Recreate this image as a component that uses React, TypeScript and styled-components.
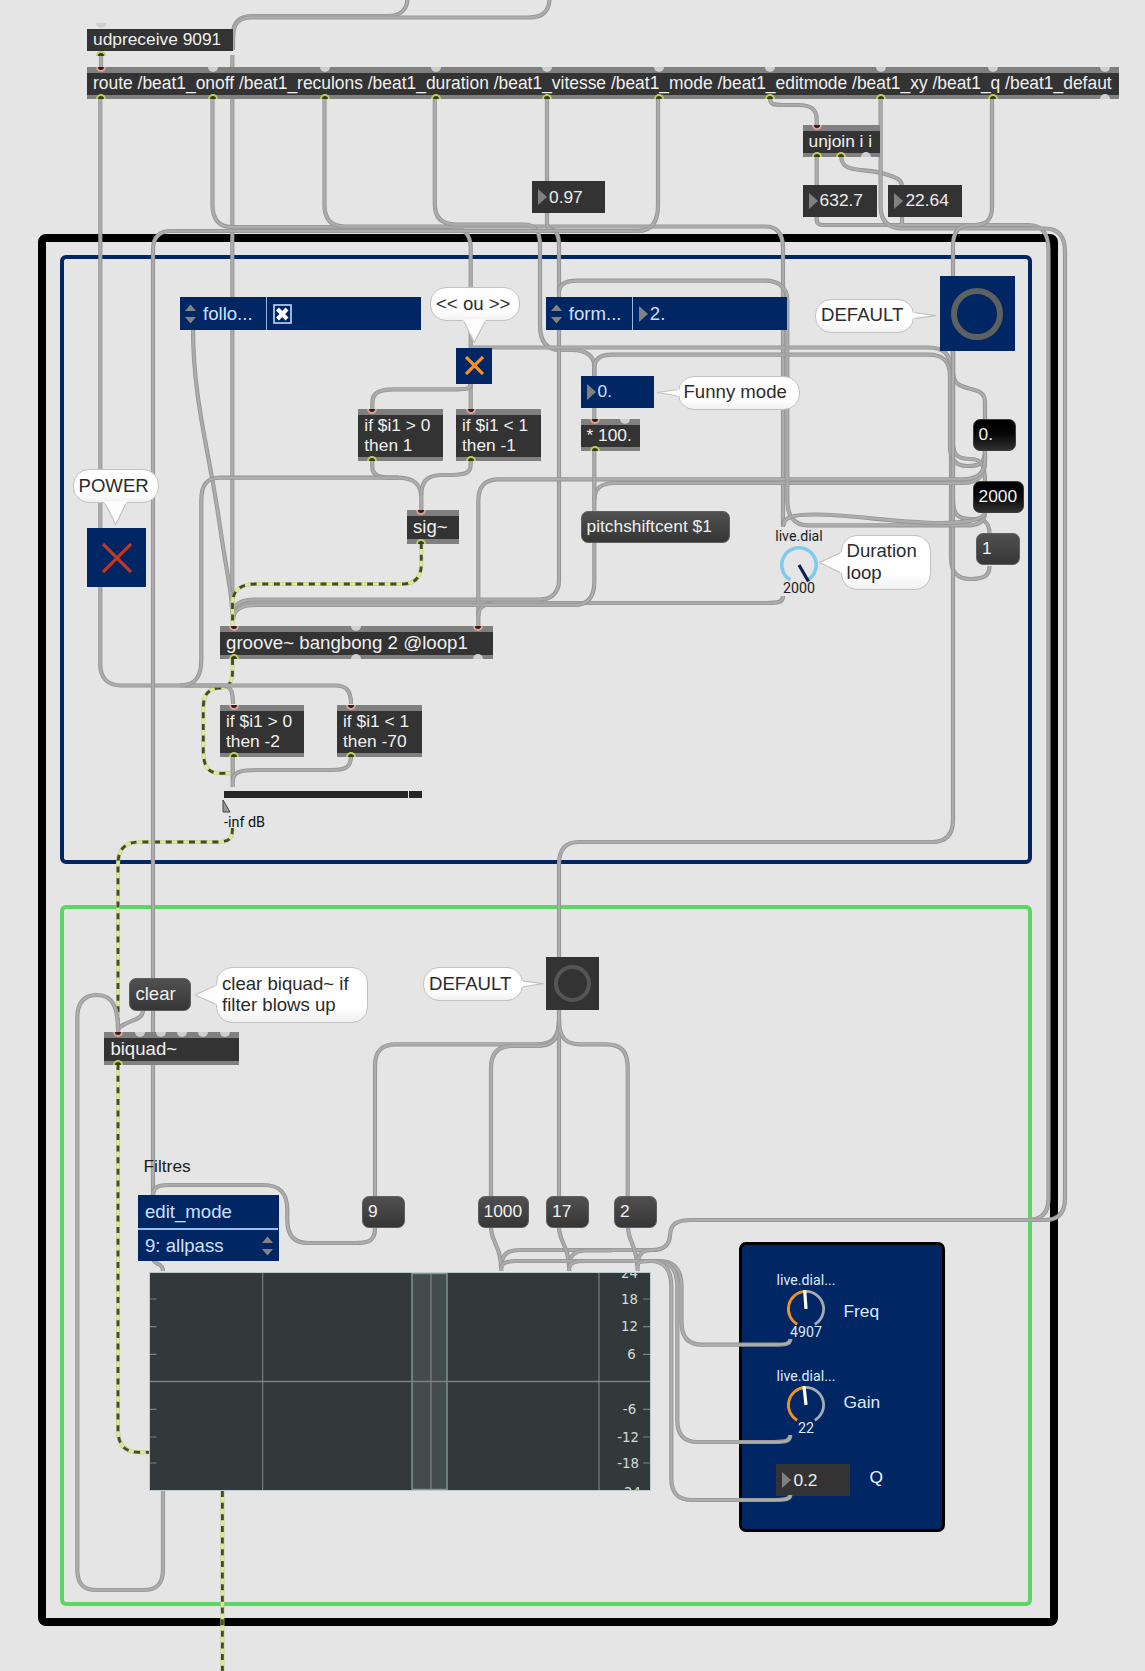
import React from "react";
import styled, { createGlobalStyle, css } from "styled-components";

const sans = `"Liberation Sans", Arial, sans-serif`;
const navy = "#002664";

const Global = createGlobalStyle`
  html, body { margin: 0; padding: 0; background: #e5e5e5; }
  * { box-sizing: border-box; }
`;

const Patcher = styled.main`
  position: relative;
  width: 1145px;
  height: 1671px;
  overflow: hidden;
  background: #e5e5e5;
  font-family: ${sans};
`;

type Place = { $x: number; $y: number; $w?: number; $h?: number };
const place = css<Place>`
  position: absolute;
  left: ${(p) => p.$x}px;
  top: ${(p) => p.$y}px;
  ${(p) => p.$w !== undefined && `width: ${p.$w}px;`}
  ${(p) => p.$h !== undefined && `height: ${p.$h}px;`}
`;

const Panel = styled.section<Place & { $line: string; $border: number; $radius: number; $fill?: string }>`
  ${place}
  border: ${(p) => p.$border}px solid ${(p) => p.$line};
  border-radius: ${(p) => p.$radius}px;
  background: ${(p) => p.$fill ?? "transparent"};
`;

const Cables = styled.svg`
  position: absolute;
  left: 0;
  top: 0;
  pointer-events: none;
`;

/* ---------- object boxes ---------- */

const ObjectFrame = styled.div<Place & { $bare?: boolean }>`
  ${place}
  display: flex;
  flex-direction: column;
  background: ${(p) => (p.$bare ? "transparent" : "#808080")};
  padding: 6px 0;
`;

const ObjectBody = styled.div<{ $size: number }>`
  flex: 1;
  display: flex;
  align-items: center;
  padding: 0 0 2px 6px;
  background: #333;
  color: #f0f0f0;
  font-size: ${(p) => p.$size}px;
  line-height: ${(p) => (p.$size > 18 ? 21 : 20)}px;
  white-space: pre;
`;

const Port = styled.i<{ $x: number; $side: "in" | "out"; $live?: boolean }>`
  position: absolute;
  left: ${(p) => p.$x - 5}px;
  ${(p) => (p.$side === "in" ? "top: 0; border-radius: 0 0 5px 5px;" : "bottom: 0; border-radius: 5px 5px 0 0;")}
  width: 10px;
  height: 5px;
  ${(p) =>
    p.$live
      ? p.$side === "in"
        ? "background: #3a1a18; border: 2px solid #dca096; border-top: 0;"
        : "background: #373d16; border: 2px solid #bccb66; border-bottom: 0;"
      : "background: #cfcfcf;"}
`;

type ObjProps = {
  x: number; y: number; w: number; h: number; text: string; size?: number; bare?: boolean;
  ins?: number[]; outs?: number[]; idleIns?: number[]; idleOuts?: number[];
};
const Obj = ({ x, y, w, h, text, size = 17.35, bare, ins = [], outs = [], idleIns = [], idleOuts = [] }: ObjProps) => (
  <ObjectFrame $x={x} $y={y} $w={w} $h={h} $bare={bare}>
    <ObjectBody $size={size}>{text}</ObjectBody>
    {idleIns.map((p) => <Port key={"a" + p} $x={p - x} $side="in" />)}
    {idleOuts.map((p) => <Port key={"b" + p} $x={p - x} $side="out" />)}
    {ins.map((p) => <Port key={"c" + p} $x={p - x} $side="in" $live />)}
    {outs.map((p) => <Port key={"d" + p} $x={p - x} $side="out" $live />)}
  </ObjectFrame>
);

/* ---------- message and number boxes ---------- */

const Message = styled.button<Place & { $hot?: boolean; $size?: number }>`
  ${place}
  display: flex;
  align-items: center;
  padding: 0 0 1px 5px;
  border: 1px solid ${(p) => (p.$hot ? "#3c3c3c" : "#5e5e5e")};
  border-radius: 7px;
  background: ${(p) => (p.$hot ? "linear-gradient(#000, #050505 45%, #303030)" : "linear-gradient(#505050, #363636)")};
  color: #f0f0f0;
  font: ${(p) => p.$size ?? 17.35}px ${sans};
  white-space: pre;
`;

const NumberFrame = styled.div<Place & { $blue?: boolean }>`
  ${place}
  display: flex;
  align-items: center;
  gap: 2px;
  padding-left: 6px;
  background: ${(p) => (p.$blue ? navy : "#333")};
  color: ${(p) => (p.$blue ? "#cfe0ff" : "#ececec")};
  font-size: 17.35px;
  white-space: pre;
`;

const Flag = styled.i`
  width: 0;
  height: 0;
  border-left: 9px solid #808080;
  border-top: 8px solid transparent;
  border-bottom: 8px solid transparent;
`;

const NumberBox = ({ x, y, w = 74, h = 32, value, blue }: { x: number; y: number; w?: number; h?: number; value: string; blue?: boolean }) => (
  <NumberFrame $x={x} $y={y} $w={w} $h={h} $blue={blue}>
    <Flag />
    <span>{value}</span>
  </NumberFrame>
);

/* ---------- attribute controls ---------- */

const AttrFrame = styled.div<Place>`
  ${place}
  display: flex;
  background: ${navy};
  color: #cfe0ff;
  font-size: 18.6px;
`;
const AttrName = styled.div`
  width: 87px;
  display: flex;
  align-items: center;
  gap: 7px;
  padding-left: 5px;
  border-right: 1px solid #9db6e6;
`;
const AttrValue = styled.div`
  flex: 1;
  display: flex;
  align-items: center;
  gap: 2px;
  padding-left: 6px;
`;
const Arrows = () => (
  <svg width="11" height="20" viewBox="0 0 11 20">
    <path d="M0 7 5.5 .5 11 7ZM0 13 5.5 19.5 11 13Z" fill="#838383" />
  </svg>
);
const CheckBox = () => (
  <svg width="19" height="20" viewBox="0 0 19 20">
    <rect x="1" y="1" width="17" height="18" fill="none" stroke="#b9cdf4" strokeWidth="1.7" />
    <path d="M4.5 5 14 15M14 5 4.5 15" stroke="#fff" strokeWidth="4" />
  </svg>
);

const MenuFrame = styled.div<Place>`
  ${place}
  display: grid;
  grid-template-rows: 35px 1fr;
  background: ${navy};
  color: #cfe0ff;
  font-size: 18.6px;
`;
const MenuRow = styled.div<{ $ruled?: boolean }>`
  display: flex;
  align-items: center;
  justify-content: space-between;
  padding: 1px 6px 0 7px;
  ${(p) => p.$ruled && "border-bottom: 2px solid #a3bbea; margin-right: 1px;"}
`;

/* ---------- toggles, bangs, dials ---------- */

const Square = styled.button<Place & { $fill: string }>`
  ${place}
  display: grid;
  place-items: center;
  padding: 0;
  border: 0;
  background: ${(p) => p.$fill};
`;
const Cross = ({ size, color }: { size: number; color: string }) => (
  <svg width={size} height={size} viewBox={`0 0 ${size} ${size}`}>
    <path d={`M1 1 ${size - 1} ${size - 1}M${size - 1} 1 1 ${size - 1}`} stroke={color} strokeWidth="3.2" />
  </svg>
);
const Ring = styled.i<{ $d: number; $t: number; $c: string }>`
  width: ${(p) => p.$d}px;
  height: ${(p) => p.$d}px;
  border: ${(p) => p.$t}px solid ${(p) => p.$c};
  border-radius: 50%;
`;

const DialFrame = styled.div<Place & { $ink: string }>`
  ${place}
  display: flex;
  flex-direction: column;
  align-items: center;
  color: ${(p) => p.$ink};
  font: 14.2px/15px Roboto, sans-serif;
  white-space: nowrap;
`;
const DialFace = styled.svg`
  display: block;
  margin: 1px 0 -4px;
`;

const polar = (r: number, deg: number) => {
  const a = (deg * Math.PI) / 180;
  return `${(20 + r * Math.cos(a)).toFixed(2)} ${(20 + r * Math.sin(a)).toFixed(2)}`;
};
type DialProps = { x: number; y: number; w: number; label: string; value: string; angle: number; ink: string; on: string; off: string; needle: string; t: number };
const Dial = ({ x, y, w, label, value, angle, ink, on, off, needle, t }: DialProps) => {
  const r = 19 - t / 2;
  const large = angle - 120 > 180 ? 1 : 0;
  return (
    <DialFrame $x={x} $y={y} $w={w} $ink={ink}>
      <span>{label}</span>
      <DialFace width="40" height="40" viewBox="0 0 40 40">
        {angle < 415 && <path d={`M${polar(r, angle + 4)} A${r} ${r} 0 0 1 ${polar(r, 420)}`} fill="none" stroke={off} strokeWidth={t} />}
        <path d={`M${polar(r, 120)} A${r} ${r} 0 ${large} 1 ${polar(r, angle)}`} fill="none" stroke={on} strokeWidth={t} />
        <path d={`M${polar(0, 0)} L${polar(19, angle)}`} stroke={needle} strokeWidth="3.2" />
      </DialFace>
      <span>{value}</span>
    </DialFrame>
  );
};

/* ---------- comments ---------- */

const BubbleFrame = styled.div<Place & { $radius: number }>`
  ${place}
  display: flex;
  align-items: center;
  padding: 0 0 1px 5px;
  border: 1.5px solid #c2c2c2;
  border-radius: ${(p) => p.$radius}px;
  background: linear-gradient(#fff 72%, #f1f1f1);
  color: #2b2b2b;
  font-size: 18.6px;
  line-height: 21.5px;
  white-space: pre;
`;
type BubbleProps = { x: number; y: number; w: number; h: number; text: string; tip: [number, number]; a: [number, number]; b: [number, number]; radius?: number };
const Bubble = ({ x, y, w, h, text, tip, a, b, radius = 16 }: BubbleProps) => (
  <>
    <BubbleFrame $x={x} $y={y} $w={w} $h={h} $radius={radius}>{text}</BubbleFrame>
    <Cables width="1145" height="1671">
      <path d={`M${a} L${tip} L${b}`} fill="#fdfdfd" stroke="#c2c2c2" strokeWidth="1.2" />
      <path d={`M${a} L${b}`} stroke="#fdfdfd" strokeWidth="2.2" />
    </Cables>
  </>
);

const Note = styled.span<Place & { $color: string; $font?: string }>`
  ${place}
  color: ${(p) => p.$color};
  font: ${(p) => p.$font ?? `17.35px/20px ${sans}`};
  white-space: pre;
`;

/* ---------- gain slider ---------- */

const GainTrack = styled.div<Place>`
  ${place}
  display: grid;
  grid-template-columns: 1fr 13px;
  gap: 1px;
  & > i { background: #262626; }
`;

/* ---------- patch cords ---------- */

const cords = [
  "M407.5 -2C407.5 10 400 16 388 16H252C240 16 233 22 233 34V50",
  "M549.5 -2C549.5 11 543 17.5 529 17.5H252C240 17.5 233 22 233 38",
  "M101 54V70",
  "M232.3 55V612",
  "M100.3 98V665C100.3 678 108 685.5 121 685.5H222C230 685.5 233 690 233 704",
  "M185 685.5H335C346 685.5 351 690 351 704",
  "M212.5 98V205C212.5 219 219 227 232 227H448C463 227 470.7 233 470.7 248V409",
  "M324.5 98V205C324.5 219 331 226.5 345 226.5H765C777 226.5 783 234 783 248V526",
  "M434.8 98V204C434.8 217 441 224.5 456 224.5H524C535 224.5 540 231 540 245V325C540 341 546 350 560 350H572C586 350 594.3 356 594.3 366V376",
  "M547 98V181",
  "M547 212V224C547 228 550 229 553 230C557 231 559 238 559 246V580C559 592 552 599.5 540 599.5H256C242 599.5 233 604 233 614",
  "M658 98V205C658 221 652 231 638 231H171C158 231 153 238 153 250V1195",
  "M770 98C770 104 773 105 783 105H798C811 105 816.7 109 816.7 120V126",
  "M816.7 156V185",
  "M841.2 156C841.2 175 865 167 885 174C898 178 902 180 902 186",
  "M816.7 215V220C816.7 224 819 225 824 225H1028C1042 225 1048.5 233 1048.5 250V1198C1048.5 1212 1042 1220 1028 1220",
  "M902 215V224",
  "M880.6 98V206C880.6 221 888 228.5 903 228.5H1045C1059 228.5 1065 237 1065 252V1198C1065 1212 1059 1220 1045 1220H691C677 1220 670 1224 670 1236C669 1246 663 1250 652 1250H521C508 1250 501.5 1254 501.5 1266",
  "M992 98V207C992 219 987 225 975 225H968C958 226 953 233 953 246V276",
  "M193 328C193 400 209 450 219 520S232 590 232.3 614",
  "M470.7 347.5H928C944 347.5 951 354 951 372V557C951 572 957 579 970 579C984 579 989.5 576 989.5 566",
  "M594.3 376V368C594.3 359 600 354.7 612 354.7H928C943 354.7 950 361 950 376V446C950 458 955 466 967 466C979 466 985 464 985 450",
  "M594.3 406V420",
  "M953 350V372C953 396 985 382 985 402V420",
  "M953 350V444C953 456 960 459 970 459C980 459 985 463 985 481",
  "M953 350V500C953 514 958 519 970 519C984 519 989.5 521 989.5 534",
  "M953 350V820C953 835 946 842 932 842H579C566 842 559 849 559 864V957",
  "M985 450V462C985 476 977 483 963 483H615C601 483 594.3 488 594.3 500",
  "M985 450V460C985 473 977 479.3 963 479.3H499C485 479.3 478.3 486 478.3 501V628",
  "M985 512C985 521 980 525.3 968 525.3H808C794 525.3 787.3 516 787.3 500V300C787.3 288 779 280.7 765 280.7H578C565 280.7 559 285 559 292",
  "M783 527C783 517 792 514.5 815 514.5C850 514.5 900 523 940 523C965 523 985 520 985 512",
  "M783 596C783 602 780 603 766 603H256C242 603 233 608 233 618",
  "M766 603H498C486 603 478.3 606 478.3 616",
  "M594.3 450V582C594.3 597 588 605 574 605H256C242 605 233 610 233 620",
  "M470.7 383C470.7 389 468 389.3 456 389.3H394C379 389.3 372.3 393 372.3 403V410",
  "M372.3 460V467C372.3 474 378 477.7 390 477.7H398C414 478 421.3 484 421.3 498V512",
  "M470.7 460V464C470.7 474 464 474.5 452 475H440C426 476 421.3 482 421.3 496",
  "M398 477.7H220C206 477.7 201.3 486 201.3 500V660C201.3 676 196 685.5 180 685.5",
  "M232.7 756V787",
  "M351 756C351 767 346 770 332 770H256C241 770 233 772 233 780",
  "M143 1010C143 1019 134 1019 125 1024C119 1027 118 1028 118 1033",
  "M118 1030C118 1008 113 995 97 995C84 995 77.3 1003 77.3 1018V1569C77.3 1584 83 1590 97 1590H143C157 1590 163 1584 163 1569V1491",
  "M153 1196C153 1187 158 1185 170 1185H263C280 1185 287.3 1193 287.3 1210V1220C287.3 1235 294 1243 308 1243H356C370 1243 375 1240 375 1228",
  "M153 1258C153 1265 163 1262 163 1271",
  "M559 1009V1198",
  "M559 1020C559 1038 552 1044.3 536 1044.3H396C382 1044.3 375 1051 375 1066V1198",
  "M559 1022C559 1040 552 1046 536 1046H512C498 1046 491 1053 491 1068V1198",
  "M559 1020C559 1038 566 1044.3 580 1044.3H606C621 1044.3 627.7 1051 627.7 1068V1198",
  "M491 1227C491 1242 501.3 1246 501.3 1271",
  "M559 1227C559 1242 569.3 1246 569.3 1271",
  "M628 1227C628 1242 637.7 1246 637.7 1271",
  "M569.3 1266C569.3 1256 574 1251 585 1250.5H612",
  "M637.7 1266C637.7 1255 641 1250 652 1250",
  "M501.3 1268C501.3 1263 508 1261 517 1261H659C675 1261 681.5 1270 681.5 1287V1322C681.5 1337 688 1344.7 702 1344.7H774C786 1344.7 790.3 1344 790.3 1339",
  "M569.3 1268C569.3 1263 576 1261 585 1261H655C671 1261 677.3 1270 677.3 1287V1420C677.3 1435 684 1442 698 1442H774C786 1442 790.3 1441 790.3 1435",
  "M637.7 1265C637.7 1262 642 1261 650 1261C665 1261 671.3 1270 671.3 1287V1478C671.3 1493 678 1500 692 1500H774C786 1500 790.3 1499 790.3 1495",
];

const signals = [
  "M232.5 659V672C232.5 682 229 688 218 688C208 689 203.3 695 203.3 708V750C203.3 766 208 773.3 220 773.3H232",
  "M232.5 828C232.5 839 229 842 217 842H140C125 842 118 849 118 864V1032",
  "M118 1064V1430C118 1445 125 1452.3 139 1452.3H149",
  "M222.4 1491V1671",
];
const grooveSignal = "M421.3 543V564C421.3 577 415 584 402 584H256C240 584 232.5 590 232.5 604V627";

const SignalCord = ({ d }: { d: string }) => (
  <g>
    <path d={d} stroke="#bccb88" strokeWidth="4" />
    <path d={d} stroke="#dbec96" strokeWidth="2.8" />
    <path d={d} stroke="#44492e" strokeWidth="2.8" strokeDasharray="6 5.65" />
  </g>
);

const PatchCords = () => (
  <Cables width="1145" height="1671" fill="none">
    {signals.map((d) => <SignalCord key={d} d={d} />)}
    {cords.map((d) => (
      <g key={d}>
        <path d={d} stroke="#959595" strokeWidth="4.2" />
        <path d={d} stroke="#acacac" strokeWidth="2.4" />
      </g>
    ))}
    <SignalCord d={grooveSignal} />
  </Cables>
);

/* ---------- filter graph ---------- */

const FilterFrame = styled.div<Place>`
  ${place}
  border: 1px solid #bccdcf;
  background: #33393b;
`;
const marks: [number, string][] = [[5, "24"], [26, "18"], [53.7, "12"], [81.3, "6"], [136.3, "-6"], [164, "-12"], [190, "-18"], [219, "-24"]];
const FilterGraph = () => (
  <FilterFrame $x={149} $y={1272} $w={502} $h={219}>
    <svg width="500" height="217" viewBox="0 0 500 217">
      <rect x="262" y="0.5" width="35" height="216" fill="#434b4d" stroke="#849796" strokeWidth="1.4" />
      <path d="M0 108.5H500" stroke="#7a8183" strokeWidth="1.3" />
      <path d="M112.7 0V217M281 0V217M449 0V217" stroke="#868d8f" strokeWidth="1" />
      {marks.map(([y, t]) => (
        <g key={t}>
          {Math.abs(Number(t)) < 24 && <path d={`M0 ${y}H6.5M493 ${y}H500`} stroke="#7a8183" strokeWidth="1.2" />}
          <text x={t.length === 1 ? 481.5 : t === "-24" ? 480 : t.length === 3 ? 478 : 479.5} y={t === "24" ? 5 : t === "-24" ? 224 : y + 4.7} textAnchor="middle" fontFamily="DejaVu Sans, sans-serif" fontSize="13.3" fill="#d3d9da">{t}</text>
        </g>
      ))}
    </svg>
  </FilterFrame>
);

const routeText = "route /beat1_onoff /beat1_reculons /beat1_duration /beat1_vitesse /beat1_mode /beat1_editmode /beat1_xy /beat1_q /beat1_defaut";
const panelDial = { x: 770.5, w: 71, ink: "#dfe9ff", on: "#ec9324", off: "#a4abb4", needle: "#fff", t: 2.8, label: "live.dial..." };

export default function App() {
  return (
    <Patcher>
      <Global />
      <Panel $x={38} $y={234} $w={1019.5} $h={1391.5} $line="#000" $border={8} $radius={8} />
      <Panel $x={60} $y={255} $w={972} $h={609} $line={navy} $border={4} $radius={6} />
      <Panel $x={60} $y={904.5} $w={972} $h={701} $line="#5cd665" $border={4} $radius={6} />
      <Panel $x={738.5} $y={1242} $w={206} $h={290} $line="#000" $border={3} $radius={7} $fill={navy} />
      <NumberBox x={776.4} y={1464} value="0.2" />

      <PatchCords />
      <Note $x={143.5} $y={1156} $color="#222">Filtres</Note>

      <Obj x={87} y={23} w={145.5} h={33} text="udpreceive 9091" bare idleIns={[101]} outs={[101]} />
      <Obj x={87} y={67} w={1032} h={32} text={routeText} size={17.43} ins={[101]} idleIns={[212.8, 324.5, 436, 547.3, 658.7, 770, 881.4, 993.2, 1104.5]}
        outs={[101, 212.8, 324.5, 436, 547.3, 658.7, 770, 881.4, 993.2]} idleOuts={[1104.5]} />
      <Obj x={802.5} y={125} w={77} h={32} text="unjoin i i" ins={[816.7]} outs={[816.7, 841.2]} idleOuts={[865.7]} />
      <NumberBox x={532} y={181} value="0.97" w={73} />
      <NumberBox x={802.6} y={184.5} value="632.7" />
      <NumberBox x={888.4} y={184.5} value="22.64" />

      <AttrFrame $x={180} $y={297} $w={241} $h={33}>
        <AttrName><Arrows />follo...</AttrName>
        <AttrValue><CheckBox /></AttrValue>
      </AttrFrame>
      <AttrFrame $x={545.8} $y={297} $w={241.5} $h={33}>
        <AttrName><Arrows />form...</AttrName>
        <AttrValue><Flag />2.</AttrValue>
      </AttrFrame>

      <Square $x={456} $y={347.5} $w={36.4} $h={36} $fill={navy}><Cross size={19} color="#ff9214" /></Square>
      <Square $x={87} $y={528} $w={59} $h={59} $fill={navy}><Cross size={30} color="#c5371f" /></Square>
      <Square $x={939.6} $y={276} $w={75} $h={75} $fill={navy}><Ring $d={52} $t={6} $c="#5d615f" /></Square>
      <Square $x={546} $y={957} $w={53} $h={53} $fill="#333"><Ring $d={37} $t={4.5} $c="#555" /></Square>

      <Obj x={358.3} y={408.5} w={85} h={52.5} text={"if $i1 > 0\nthen 1"} ins={[372.3]} outs={[372.3]} />
      <Obj x={456} y={408.5} w={85} h={52.5} text={"if $i1 < 1\nthen -1"} ins={[470.7]} outs={[470.7]} />
      <Obj x={407} y={510} w={52} h={34} text="sig~" size={18.6} ins={[421.3]} outs={[421.3]} />
      <NumberBox x={580.5} y={375.5} w={73.5} value="0." blue />
      <Obj x={580.5} y={419} w={59.5} h={32} text="* 100." ins={[594.8]} idleIns={[625]} outs={[594.8]} />
      <Message $x={580.5} $y={510.5} $w={149.8} $h={32}>pitchshiftcent $1</Message>
      <Message $x={972.5} $y={419} $w={43.5} $h={32} $hot>0.</Message>
      <Message $x={972.5} $y={480.5} $w={51.5} $h={32} $hot>2000</Message>
      <Message $x={976} $y={533} $w={44} $h={32}>1</Message>

      <Dial x={764.5} y={529} w={69} label="live.dial" value="2000" angle={420} ink="#1c1c1c" on="#7ecbec" off="#7ecbec" needle="#0b2153" t={3.6} />

      <Obj x={220} y={626} w={273} h={33} text="groove~ bangbong 2 @loop1" size={18.7} ins={[234, 478.3]} idleIns={[356]} outs={[234]} idleOuts={[356, 478.3]} />
      <Obj x={220} y={704.5} w={84.4} h={52.5} text={"if $i1 > 0\nthen -2"} ins={[234]} outs={[234]} />
      <Obj x={337} y={704.5} w={85} h={52.5} text={"if $i1 < 1\nthen -70"} ins={[351.3]} outs={[351.3]} />

      <GainTrack $x={224} $y={791} $w={198} $h={7}><i /><i /></GainTrack>
      <Cables width="1145" height="1671">
        <path d="M223 800V812H230Z" fill="#999" stroke="#444" strokeWidth="1" />
      </Cables>
      <Note $x={224} $y={814} $color="#111" $font="14.4px/17px Roboto, sans-serif">-inf dB</Note>

      <Bubble x={430} y={286.5} w={89.5} h={34.5} text="<< ou >>" tip={[474.3, 342.5]} a={[463.5, 320.4]} b={[485.5, 320.4]} />
      <Bubble x={72.5} y={468.5} w={86} h={34.5} text="POWER" tip={[115.7, 524.5]} a={[104.5, 502.4]} b={[126.5, 502.4]} />
      <Bubble x={677.5} y={375.5} w={122} h={34} text="Funny mode" tip={[657, 392.5]} a={[678.1, 389.5]} b={[678.1, 396]} />
      <Bubble x={815} y={298.5} w={99} h={34} text="DEFAULT" tip={[936, 315.7]} a={[913.4, 312.5]} b={[913.4, 318.7]} />
      <Bubble x={840.5} y={534.5} w={90.5} h={55.5} text={"Duration\nloop"} tip={[819.5, 562.5]} a={[841.1, 552.5]} b={[841.1, 573]} />
      <Bubble x={216} y={966.5} w={151.5} h={56} text={"clear biquad~ if\nfilter blows up"} tip={[195, 995]} a={[216.6, 985]} b={[216.6, 1004.5]} />
      <Bubble x={423} y={966.5} w={99.5} h={34.5} text="DEFAULT" tip={[543.5, 983.7]} a={[521.9, 980.8]} b={[521.9, 987]} />

      <Message $x={129.4} $y={977.5} $w={62} $h={33.5} $size={18.6}>clear</Message>
      <Obj x={104.4} y={1031.5} w={134.5} h={33.5} text="biquad~" size={18.6} ins={[118.3]} idleIns={[139.7, 161, 182.3, 203.5, 224.7]} outs={[118.3]} />

      <MenuFrame $x={138} $y={1194.5} $w={141} $h={66}>
        <MenuRow $ruled>edit_mode</MenuRow>
        <MenuRow>9: allpass<Arrows /></MenuRow>
      </MenuFrame>
      <Message $x={362} $y={1196.4} $w={43} $h={32}>9</Message>
      <Message $x={477.5} $y={1196.4} $w={51} $h={32}>1000</Message>
      <Message $x={546} $y={1196.4} $w={43} $h={32}>17</Message>
      <Message $x={614} $y={1196.4} $w={43} $h={32}>2</Message>

      <FilterGraph />

      <Dial {...panelDial} y={1272.5} value="4907" angle={266} />
      <Dial {...panelDial} y={1368.5} value="22" angle={264} />
      <Note $x={843.5} $y={1301} $color="#dfe9ff">Freq</Note>
      <Note $x={843.5} $y={1392} $color="#dfe9ff">Gain</Note>
      <Note $x={869.5} $y={1467.4} $color="#f4f8ff">Q</Note>
    </Patcher>
  );
}
